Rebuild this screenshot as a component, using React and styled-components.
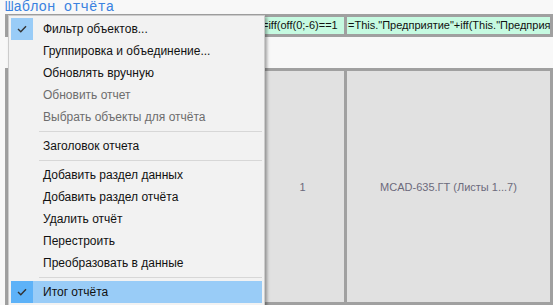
import React from "react"
import styled, { createGlobalStyle } from "styled-components"

const GlobalStyle = createGlobalStyle`
  html, body {
    margin: 0;
    padding: 0;
    background: #f8f8f8;
    overflow: hidden;
  }
`

const Page = styled.div`
  position: relative;
  width: 553px;
  height: 305px;
  overflow: hidden;
  font-family: "Liberation Sans", Arial, sans-serif;
`

const Title = styled.div`
  height: 14px;
  padding-left: 5px;
  font-family: "Liberation Mono", "Courier New", monospace;
  font-size: 14px;
  line-height: 14px;
  color: #3a82e0;
`

const Grid = styled.div`
  display: grid;
  grid-template-columns: 250px 83px 203px;
  column-gap: 3px;
  margin-left: 5px;
  width: 542px;
  border: 3px solid #a0a0a0;
  background: #a0a0a0;
  margin-top: ${props => props.top || "0px"};
`

const FormulaCell = styled.div`
  height: 17px;
  background: #c6fae1;
  font-size: 11px;
  line-height: 17px;
  color: #111;
  white-space: nowrap;
  overflow: hidden;
  padding-left: 1px;
`

const DataCell = styled.div`
  height: 231px;
  background: #e1e1e1;
  display: flex;
  align-items: center;
  justify-content: center;
  font-size: 11px;
  color: #6c6a7c;
  white-space: nowrap;
`

const Menu = styled.div`
  position: absolute;
  left: 8px;
  top: 15px;
  width: 251px;
  padding: 2px;
  background: #f2f2f2;
  border: 1px solid #cccccc;
  box-shadow: 2px 2px 3px rgba(0, 0, 0, 0.35);
  font-family: "Liberation Sans", Arial, sans-serif;
  font-size: 12px;
`

const Item = styled.div`
  display: flex;
  align-items: center;
  height: 22px;
  background: ${props => (props.active ? "#99ccf7" : "transparent")};
  color: ${props => (props.disabled ? "#6d6d6d" : "#111")};
`

const CheckBox = styled.div`
  width: 22px;
  height: 22px;
  display: flex;
  align-items: center;
  justify-content: center;
  background: ${props =>
    props.checked ? (props.active ? "#5db2f8" : "#99ccf7") : "transparent"};
`

const Label = styled.span`
  margin-left: 10px;
`

const Separator = styled.div`
  height: 7px;
  display: flex;
  align-items: center;
  padding-left: 28px;

  &::after {
    content: "";
    flex: 1;
    height: 1px;
    background: #d7d7d7;
  }
`

const Check = () => (
  <svg width="10" height="8" viewBox="0 0 10 8">
    <polyline points="1,4 3.8,6.8 9,1.2" fill="none" stroke="#333" strokeWidth="1.4" />
  </svg>
)

const items = [
  { label: "Фильтр объектов...", checked: true },
  { label: "Группировка и объединение..." },
  { label: "Обновлять вручную" },
  { label: "Обновить отчет", disabled: true },
  { label: "Выбрать объекты для отчёта", disabled: true },
  { sep: true },
  { label: "Заголовок отчета" },
  { sep: true },
  { label: "Добавить раздел данных" },
  { label: "Добавить раздел отчёта" },
  { label: "Удалить отчёт" },
  { label: "Перестроить" },
  { label: "Преобразовать в данные" },
  { sep: true },
  { label: "Итог отчёта", checked: true, active: true },
]

export default function App() {
  return (
    <Page>
      <GlobalStyle />
      <Title>Шаблон отчёта</Title>
      <Grid>
        <FormulaCell />
        <FormulaCell>=iff(off(0;-6)==1</FormulaCell>
        <FormulaCell>=This."Предприятие"+iff(This."Предприя</FormulaCell>
      </Grid>
      <Grid top="31px">
        <DataCell />
        <DataCell>1</DataCell>
        <DataCell>MCAD-635.ГТ (Листы 1...7)</DataCell>
      </Grid>
      <Menu>
        {items.map((it, i) =>
          it.sep ? (
            <Separator key={i} />
          ) : (
            <Item key={i} active={it.active} disabled={it.disabled}>
              <CheckBox checked={it.checked} active={it.active}>
                {it.checked && <Check />}
              </CheckBox>
              <Label>{it.label}</Label>
            </Item>
          )
        )}
      </Menu>
    </Page>
  )
}
